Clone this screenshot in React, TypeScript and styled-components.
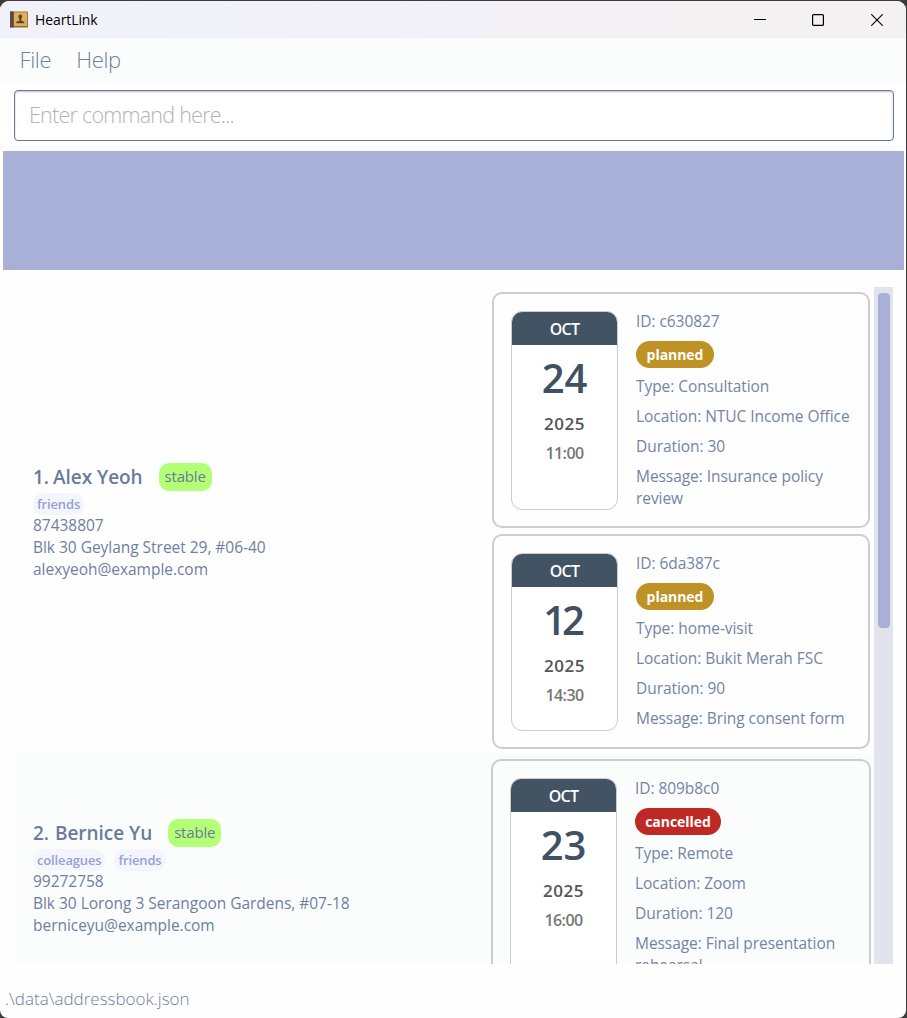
import React from "react";
import styled, { createGlobalStyle } from "styled-components";

const GlobalStyle = createGlobalStyle`
  * { box-sizing: border-box; }
  body {
    margin: 0;
    background: #3c3c3f;
    font-family: "Open Sans", "Noto Sans", sans-serif;
    color: #6e7f9f;
    overflow: hidden;
  }
`;

const Window = styled.div`
  width: 907px;
  height: 1018px;
  padding: 1px 1px 0 0;
  background: #3c3c3f;
`;

const Frame = styled.div`
  height: 1017px;
  display: flex;
  flex-direction: column;
  background: #fefefe;
  border-radius: 9px 9px 8px 8px;
  overflow: hidden;
`;

const TitleBar = styled.header`
  height: 37px;
  flex: none;
  display: flex;
  align-items: center;
  padding-left: 10px;
  background: linear-gradient(90deg, #f1f2f9, #f2f1f7 50%, #f4f1f3 75%);
  color: #000;
`;

const Title = styled.span`
  flex: 1;
  margin-left: 7px;
  font-size: 14px;
  letter-spacing: -0.1px;
`;

const WindowButton = styled.span`
  width: 58.5px;
  display: flex;
  justify-content: center;
`;

const MenuBar = styled.nav`
  height: 46px;
  flex: none;
  display: flex;
  align-items: center;
  gap: 25px;
  padding: 0 19.5px 4px;
  background: #fbfdfc;
`;

const MenuItem = styled.span`
  font-size: 22px;
  font-weight: 300;
  line-height: 30px;
  letter-spacing: -0.35px;
`;

const CommandArea = styled.div`
  height: 67px;
  flex: none;
  padding: 6px 12px 0 14px;
  background: linear-gradient(#fff 62px, #fcfcfc 62px);
`;

const CommandInput = styled.div`
  height: 51px;
  display: flex;
  align-items: center;
  padding: 0 14px 2px;
  border: 1.5px solid #65789c;
  border-radius: 4px;
  background: #fff;
  box-shadow: inset 0 1px 2px #bcc0c8;
  color: #b3b3b3;
  font-size: 21.5px;
  font-weight: 300;
  letter-spacing: -0.76px;
`;

const ResultPanel = styled.div`
  height: 119px;
  flex: none;
  margin: 0 2px 0 3px;
  background: #a9b0d7;
`;

const ListArea = styled.main`
  height: 677px;
  flex: none;
  margin: 17px 13px 0 14px;
  display: flex;
`;

const PersonList = styled.div`
  flex: 1;
  overflow: hidden;
  display: flex;
  flex-direction: column;
`;

const PersonRow = styled.section<{ $alt?: boolean }>`
  height: 467px;
  flex: none;
  display: flex;
  justify-content: space-between;
  padding: 5px ${(p) => (p.$alt ? 3 : 4)}px 5px 19px;
  background: ${(p) => (p.$alt ? "#fbfdfc" : "#fefefe")};
`;

const PersonInfo = styled.div<{ $top: number }>`
  padding-top: ${(p) => p.$top}px;
  display: flex;
  flex-direction: column;
  align-items: flex-start;
`;

const NameLine = styled.div`
  height: 28px;
  display: flex;
  align-items: center;
  font-size: 19px;
  font-weight: 600;
  color: #6a7b9b;
`;

const Index = styled.span<{ $width: number }>`
  width: ${(p) => p.$width}px;
  letter-spacing: -0.2px;
`;

const Name = styled.span`
  letter-spacing: -0.05px;
`;

const Status = styled.span`
  height: 28px;
  width: 53px;
  margin-left: 16px;
  border-radius: 10px;
  background: #b3ff76;
  text-align: center;
  font-size: 15px;
  font-weight: 400;
  line-height: 27px;
  letter-spacing: -0.2px;
`;

const Tags = styled.div`
  display: flex;
  gap: 9px;
  margin: 2px 0 0;
`;

const Tag = styled.span`
  height: 22px;
  padding: 0 4px;
  border-radius: 10px;
  background: #f4f6fe;
  color: #979fd6;
  font-size: 13px;
  font-weight: 600;
  line-height: 22px;
  letter-spacing: -0.15px;
`;

const InfoLine = styled.div`
  margin: -1px 0 1px;
  font-size: 15.5px;
  line-height: 22px;
  letter-spacing: -0.03px;
`;

const Cards = styled.div<{ $alt?: boolean }>`
  width: ${(p) => (p.$alt ? 380 : 378)}px;
  display: flex;
  flex-direction: column;
  gap: 6px;
`;

const Card = styled.article<{ $height: number }>`
  height: ${(p) => p.$height}px;
  flex: none;
  display: flex;
  gap: 18px;
  padding: 17px 0 16px 17px;
  border: 2px solid #cdcdcd;
  border-radius: 10px;
`;

const Calendar = styled.div`
  width: 107px;
  display: flex;
  flex-direction: column;
  border: 1px solid #c9cbcc;
  border-radius: 11px;
  background: #fff;
  overflow: hidden;
  text-align: center;
`;

const Month = styled.div`
  height: 33px;
  background: #425363;
  color: #fff;
  font-size: 16px;
  font-weight: 600;
  line-height: 34px;
  letter-spacing: -0.8px;
`;

const Day = styled.div<{ $tight: boolean }>`
  height: 54px;
  margin-top: 6px;
  color: #405164;
  font-size: 40px;
  font-weight: 600;
  line-height: 54px;
  letter-spacing: ${(p) => (p.$tight ? -4 : 0)}px;
  text-indent: ${(p) => (p.$tight ? -5 : 0)}px;
`;

const Year = styled.div`
  margin-top: 7px;
  color: #555;
  font-size: 17px;
  font-weight: 600;
  line-height: 24px;
  letter-spacing: 0.5px;
`;

const Time = styled.div`
  margin-top: 6px;
  color: #777;
  font-size: 16px;
  font-weight: 600;
  line-height: 22px;
  letter-spacing: -0.6px;
`;

const Details = styled.div`
  flex: 1;
  display: flex;
  flex-direction: column;
  align-items: flex-start;
  gap: 8px;
`;

const Detail = styled.div`
  margin: -1px 0 1px;
  font-size: 15.5px;
  line-height: 22px;
  letter-spacing: -0.06px;
  color: #7384a6;
  white-space: pre-line;
`;

const Badge = styled.span<{ $cancelled?: boolean }>`
  height: 27px;
  width: ${(p) => (p.$cancelled ? 86 : 78)}px;
  border-radius: 14px;
  background: ${(p) => (p.$cancelled ? "#c02825" : "#be9224")};
  color: #fff;
  font-size: 14px;
  font-weight: 700;
  line-height: 27px;
  letter-spacing: -0.05px;
  text-align: center;
`;

const ScrollTrack = styled.div`
  width: 19px;
  padding: 6px 3px 0 4px;
  background: #e3e3ee;
`;

const ScrollThumb = styled.div`
  height: 335px;
  border-radius: 4px;
  background: #a9b0d7;
`;

const StatusBar = styled.footer`
  flex: 1;
  margin-top: 15px;
  border-top: 1px solid #fbfbfb;
  padding: 7px 5px;
  font-size: 17px;
  font-weight: 300;
  line-height: 24px;
`;

type Appointment = {
  day: string;
  time: string;
  id: string;
  state: "planned" | "cancelled";
  type: string;
  location: string;
  duration: string;
  message: string;
  height: number;
};

type Person = {
  index: string;
  indexWidth: number;
  name: string;
  top: number;
  tags: string[];
  lines: string[];
  appointments: Appointment[];
};

const people: Person[] = [
  {
    index: "1.",
    indexWidth: 20,
    name: "Alex Yeoh",
    top: 171,
    tags: ["friends"],
    lines: ["87438807", "Blk 30 Geylang Street 29, #06-40", "alexyeoh@example.com"],
    appointments: [
      { day: "24", time: "11:00", id: "c630827", state: "planned", type: "Consultation", location: "NTUC Income Office", duration: "30", message: "Insurance policy\nreview", height: 236 },
      { day: "12", time: "14:30", id: "6da387c", state: "planned", type: "home-visit", location: "Bukit Merah FSC", duration: "90", message: "Bring consent form", height: 215 },
    ],
  },
  {
    index: "2.",
    indexWidth: 22,
    name: "Bernice Yu",
    top: 60,
    tags: ["colleagues", "friends"],
    lines: ["99272758", "Blk 30 Lorong 3 Serangoon Gardens, #07-18", "berniceyu@example.com"],
    appointments: [
      { day: "23", time: "16:00", id: "809b8c0", state: "cancelled", type: "Remote", location: "Zoom", duration: "120", message: "Final presentation\nrehearsal", height: 236 },
    ],
  },
];

const BookIcon = () => (
  <svg width="18" height="17" viewBox="0 0 18 17">
    <rect x="0" y="0.5" width="18" height="16" rx="0.8" fill="#8c6a35" />
    <rect x="0" y="0.5" width="3.5" height="16" fill="#594b43" />
    <rect x="4" y="1.3" width="13.2" height="13.7" fill="#dfae58" />
    <path d="M10.300 3.600c1.300 0 1.900.9 1.800 2.100-.1.900-.4 1.500-.8 1.900v2.200l3 .9v1.600H6.300v-1.600l3-.9V7.600c-.5-.4-.8-1-.8-1.900C8.400 4.500 9 3.600 10.300 3.600z" fill="#57452f" />
  </svg>
);

const AppointmentCard = ({ item }: { item: Appointment }) => (
  <Card $height={item.height}>
    <Calendar>
      <Month>OCT</Month>
      <Day $tight={item.day.startsWith("1")}>{item.day}</Day>
      <Year>2025</Year>
      <Time>{item.time}</Time>
    </Calendar>
    <Details>
      <Detail>ID: {item.id}</Detail>
      <Badge $cancelled={item.state === "cancelled"}>{item.state}</Badge>
      <Detail>Type: {item.type}</Detail>
      <Detail>Location: {item.location}</Detail>
      <Detail>Duration: {item.duration}</Detail>
      <Detail>Message: {item.message}</Detail>
    </Details>
  </Card>
);

export default function App() {
  return (
    <Window>
      <GlobalStyle />
      <Frame>
        <TitleBar>
          <BookIcon />
          <Title>HeartLink</Title>
          <WindowButton>
            <svg width="12" height="12" viewBox="0 0 12 12"><path d="M0 5.500h12" stroke="#000" /></svg>
          </WindowButton>
          <WindowButton>
            <svg width="12" height="12" viewBox="0 0 12 12"><rect x=".6" y=".6" width="10.8" height="10.8" rx="1" fill="none" stroke="#000" strokeWidth="1.2" /></svg>
          </WindowButton>
          <WindowButton>
            <svg width="12" height="12" viewBox="0 0 12 12"><path d="M.3.3l11.4 11.4M11.700.3L.3 11.700" stroke="#000" strokeWidth="1.1" /></svg>
          </WindowButton>
        </TitleBar>
        <MenuBar>
          <MenuItem>File</MenuItem>
          <MenuItem>Help</MenuItem>
        </MenuBar>
        <CommandArea>
          <CommandInput>Enter command here...</CommandInput>
        </CommandArea>
        <ResultPanel />
        <ListArea>
          <PersonList>
            {people.map((p, i) => (
              <PersonRow key={p.name} $alt={i === 1}>
                <PersonInfo $top={p.top}>
                  <NameLine>
                    <Index $width={p.indexWidth}>{p.index}</Index>
                    <Name>{p.name}</Name>
                    <Status>stable</Status>
                  </NameLine>
                  <Tags>{p.tags.map((t) => <Tag key={t}>{t}</Tag>)}</Tags>
                  {p.lines.map((l) => <InfoLine key={l}>{l}</InfoLine>)}
                </PersonInfo>
                <Cards $alt={i === 1}>
                  {p.appointments.map((a) => <AppointmentCard key={a.id} item={a} />)}
                </Cards>
              </PersonRow>
            ))}
          </PersonList>
          <ScrollTrack><ScrollThumb /></ScrollTrack>
        </ListArea>
        <StatusBar>.\data\addressbook.json</StatusBar>
      </Frame>
    </Window>
  );
}
